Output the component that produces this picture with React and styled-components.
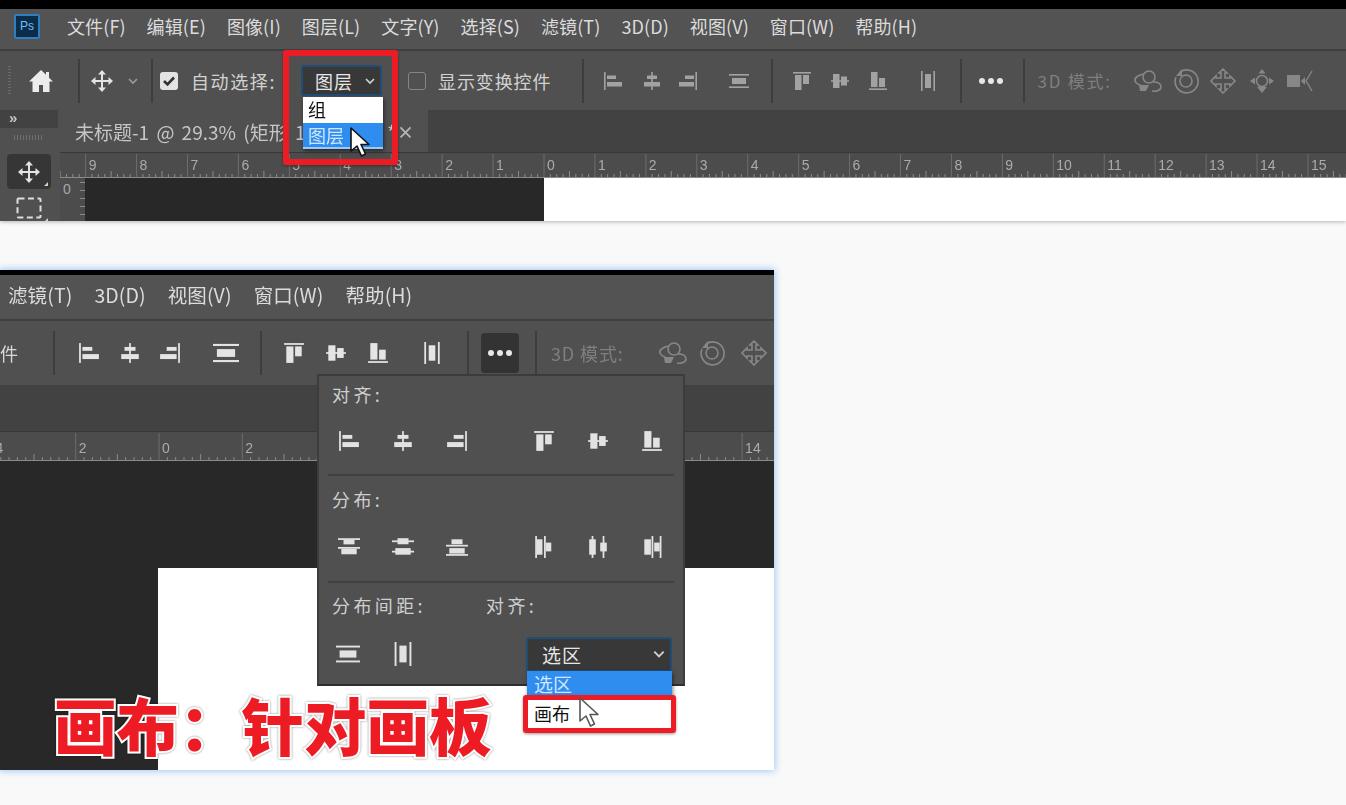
import React from "react";
import styled, { createGlobalStyle } from "styled-components";

const Global = createGlobalStyle`
  html, body { margin: 0; padding: 0; background: #f9f9f9; }
  body { width: 1346px; height: 805px; overflow: hidden; font-family: "Noto Sans CJK SC", "Noto Sans", sans-serif; }
`;

const Page = styled.div`
  width: 1346px;
  height: 805px;
  background: #f9f9f9;
`;
const TopWindow = styled.section`
  position: relative;
  height: 221px;
  background: #505050;
  box-shadow: 0 1px 4px rgba(0, 0, 0, 0.28);
`;
const BottomWindow = styled.section`
  position: relative;
  width: 774px;
  height: 500px;
  margin-top: 49px;
  background: #505050;
  box-shadow: 0 0 7px 1px #9cc8f8;
`;
const Clip = styled.div`
  height: 100%;
  overflow: hidden;
  display: flex;
  flex-direction: column;
  filter: blur(0.35px);
`;
const BlackStrip = styled.div`
  height: ${(p) => p.$h}px;
  background: #000;
  flex: none;
`;
const MenuBar = styled.nav`
  display: flex;
  align-items: center;
  flex: none;
  height: ${(p) => p.$h}px;
  padding: 0 0 6px ${(p) => p.$pl}px;
  gap: ${(p) => p.$gap}px;
  background: #535353;
  border-bottom: 2px solid #3f3f3f;
  box-sizing: border-box;
`;
const Logo = styled.div`
  width: 22px;
  height: 21px;
  border: 2px solid #2b7fc2;
  border-radius: 2px;
  background: #0c2c48;
  color: #6cc0f8;
  font: 12px/21px "Liberation Sans", sans-serif;
  text-align: center;
  margin-right: 6px;
  box-sizing: content-box;
`;
const MenuItem = styled.span`
  color: #dcdcdc;
  font-size: ${(p) => p.$fs || 18}px;
  letter-spacing: 0.1px;
  white-space: nowrap;
`;
const OptionsBar = styled.div`
  display: flex;
  align-items: center;
  flex: none;
  height: ${(p) => p.$h}px;
  background: #505050;
  overflow: hidden;
`;
const Grip = styled.div`
  width: 3px;
  height: 30px;
  margin-left: 8px;
  background: repeating-linear-gradient(#6a6a6a 0 1px, transparent 1px 3px);
`;
const Sep = styled.div`
  flex: none;
  width: 2px;
  height: 44px;
  margin-left: ${(p) => p.$ml}px;
  background: #3d3d3d;
`;
const Tool = styled.span`
  flex: none;
  display: inline-flex;
  align-items: center;
  justify-content: center;
  width: ${(p) => p.$w || 20}px;
  height: ${(p) => p.$w || 20}px;
  margin-left: ${(p) => p.$ml || 0}px;
  color: ${(p) => p.$c || "#a2a2a2"};
`;
const Check = styled.span`
  flex: none;
  display: inline-flex;
  align-items: center;
  justify-content: center;
  box-sizing: border-box;
  width: 18px;
  height: 18px;
  margin-left: ${(p) => p.$ml}px;
  border-radius: 3px;
  background: ${(p) => (p.$on ? "#e3e3e3" : "transparent")};
  border: ${(p) => (p.$on ? "none" : "1.5px solid #858585")};
`;
const OptionLabel = styled.span`
  flex: none;
  margin-left: ${(p) => p.$ml || 0}px;
  color: ${(p) => p.$c || "#d2d2d2"};
  font-size: ${(p) => p.$fs || 18}px;
  letter-spacing: ${(p) => p.$ls ?? 0.9}px;
  white-space: nowrap;
`;
const Select = styled.div`
  flex: none;
  display: flex;
  align-items: center;
  justify-content: space-between;
  box-sizing: border-box;
  width: ${(p) => p.$w}px;
  height: ${(p) => p.$h}px;
  margin-left: ${(p) => p.$ml || 0}px;
  padding: 0 4px 0 ${(p) => p.$pl}px;
  background: #383838;
  border: 2px solid #204d78;
  border-radius: 3px;
  color: #e6e6e6;
  font-size: ${(p) => p.$fs}px;
  letter-spacing: 1px;
`;
const DotsButton = styled.div`
  flex: none;
  display: flex;
  align-items: center;
  justify-content: center;
  width: 38px;
  height: 40px;
  margin-left: ${(p) => p.$ml}px;
  border-radius: 4px;
  background: #333;
`;
const Dots = styled.span`
  display: inline-flex;
  gap: 3px;
  margin-left: ${(p) => p.$ml || 0}px;
  i {
    width: 6px;
    height: 6px;
    border-radius: 50%;
    background: #e8e8e8;
  }
`;
const Work = styled.div`
  display: flex;
  flex: 1;
  min-height: 0;
  gap: 2px;
`;
const Side = styled.aside`
  flex: none;
  width: 58px;
  background: #505050;
  display: flex;
  flex-direction: column;
  align-items: center;
`;
const SideHead = styled.div`
  flex: none;
  align-self: stretch;
  height: 18px;
  background: #424242;
  color: #c6c6c6;
  font: bold 15px/16px "Liberation Sans", sans-serif;
  padding-left: 9px;
`;
const SideGrip = styled.div`
  flex: none;
  width: 30px;
  height: 5px;
  margin-top: 7px;
  background: repeating-linear-gradient(90deg, #6f6f6f 0 1px, transparent 1px 3px);
`;
const SideTool = styled.div`
  position: relative;
  flex: none;
  display: flex;
  align-items: center;
  justify-content: center;
  width: 44px;
  height: 35px;
  margin-top: ${(p) => p.$mt}px;
  border-radius: 4px;
  background: ${(p) => (p.$on ? "#363636" : "transparent")};
  color: #e6e6e6;
  &::after {
    content: "";
    position: absolute;
    right: 3px;
    bottom: 3px;
    border-style: solid;
    border-width: 0 0 4px 4px;
    border-color: transparent transparent #d0d0d0 transparent;
  }
`;
const Doc = styled.div`
  flex: 1;
  min-width: 0;
  display: flex;
  flex-direction: column;
`;
const TabRow = styled.div`
  flex: none;
  height: ${(p) => p.$h}px;
  background: #424242;
  border-bottom: 1px solid #383838;
  box-sizing: border-box;
  display: flex;
`;
const Tab = styled.div`
  width: 368px;
  display: flex;
  align-items: center;
  justify-content: space-between;
  box-sizing: border-box;
  padding: 0 14px 0 15px;
  background: #505050;
  color: #c6c6c6;
  font-size: 19px;
  word-spacing: 3px;
  white-space: nowrap;
  overflow: hidden;
`;
const TabClose = styled.span`
  color: #b4b4b4;
  font-weight: 700;
  font-size: 17px;
`;
const RulerBox = styled.div`
  flex: none;
  height: ${(p) => p.$h}px;
  background: #4c4c4c;
  svg { display: block; }
`;
const CanvasRow = styled.div`
  flex: 1;
  display: flex;
  min-height: 0;
`;
const VRuler = styled.div`
  flex: none;
  width: 25px;
  background-color: #4c4c4c;
  background-image: linear-gradient(#8b8b8b 1px, transparent 1px);
  background-size: 5px 8px;
  background-position: right 4px;
  background-repeat: repeat-y;
  box-sizing: border-box;
  color: #a8a8a8;
  font: 14px/18px "Liberation Sans", sans-serif;
  padding: 2px 0 0 3px;
`;
const DarkCanvas = styled.div`
  flex: none;
  width: ${(p) => p.$w}px;
  background: #282828;
`;
const WhiteCanvas = styled.div`
  flex: 1;
  background: #fff;
`;
const ArtCanvas = styled.div`
  flex: 1;
  display: flex;
  flex-direction: column;
  background: #282828;
  &::after {
    content: "";
    margin: auto 0 0 158px;
    height: 202px;
    background: #fff;
  }
`;
const RedBox = styled.div`
  position: absolute;
  left: ${(p) => p.$x}px;
  top: ${(p) => p.$y}px;
  width: ${(p) => p.$w}px;
  height: ${(p) => p.$h}px;
  box-sizing: border-box;
  border: ${(p) => p.$b}px solid #ed1c24;
  border-radius: 3px;
  box-shadow: 0 1px 3px rgba(0, 0, 0, 0.35);
`;
const DropList = styled.div`
  position: absolute;
  left: ${(p) => p.$x}px;
  top: ${(p) => p.$y}px;
  width: ${(p) => p.$w}px;
  display: flex;
  flex-direction: column;
  box-shadow: 1px 2px 4px rgba(0, 0, 0, 0.5);
`;
const DropItem = styled.div`
  height: ${(p) => p.$h}px;
  box-sizing: border-box;
  padding-left: ${(p) => p.$pl}px;
  background: ${(p) => (p.$on ? "#2f8df0" : "#fff")};
  color: ${(p) => (p.$on ? "#cfe6ff" : "#111")};
  border-bottom: ${(p) => (p.$line ? "2px solid #9ccaf8" : "none")};
  font-size: ${(p) => p.$fs}px;
  line-height: ${(p) => p.$h - 1}px;
`;
const Cursor = styled.svg`
  position: absolute;
  left: ${(p) => p.$x}px;
  top: ${(p) => p.$y}px;
`;
const Popover = styled.div`
  position: absolute;
  left: 317px;
  top: 104px;
  width: 368px;
  height: 312px;
  box-sizing: border-box;
  padding: 5px 11px 0 13px;
  background: #505050;
  border: 2px solid #3c3c3c;
  border-bottom-color: #2e2e2e;
`;
const PopLabel = styled.div`
  height: 26px;
  color: #cfcfcf;
  font-size: 18px;
  line-height: 26px;
  letter-spacing: 3.4px;
  white-space: nowrap;
`;
const IconRow = styled.div`
  display: flex;
  align-items: center;
  height: 22px;
  margin-top: ${(p) => p.$mt}px;
`;
const Rule = styled.hr`
  margin: ${(p) => p.$mt}px 0 ${(p) => p.$mb}px -4px;
  width: 346px;
  border: 0;
  height: 2px;
  background: #414141;
`;
const TwoLabels = styled.div`
  display: flex;
  gap: 60px;
`;
const BottomControls = styled.div`
  display: flex;
  align-items: center;
  justify-content: space-between;
  height: 36px;
  margin-top: 18px;
`;
const ToolGroup = styled.div`
  display: flex;
`;
const BigTitle = styled.div`
  position: absolute;
  left: 54px;
  top: 412px;
  font-family: "Noto Sans CJK SC", sans-serif;
  font-weight: 900;
  font-size: 62.5px;
  line-height: 84px;
  color: #ed1c24;
  white-space: nowrap;
  -webkit-text-stroke: 4px #fff;
  paint-order: stroke fill;
  filter: drop-shadow(0 0 1px rgba(0, 0, 0, 0.45));
`;

const icons = {
  alignLeft: <><rect x="1" y="1" width="1.6" height="18" /><rect x="4" y="4.5" width="9" height="3.5" /><rect x="4" y="11" width="15" height="4.5" /></>,
  alignHC: <><rect x="9.2" y="1" width="1.6" height="18" /><rect x="5" y="4.5" width="10" height="3.5" /><rect x="2" y="11" width="16" height="4.5" /></>,
  alignRight: <><rect x="17.4" y="1" width="1.6" height="18" /><rect x="7" y="4.5" width="9" height="3.5" /><rect x="1" y="11" width="15" height="4.5" /></>,
  distV: <><rect x="0" y="3" width="20" height="1.6" /><rect x="0" y="15.4" width="20" height="1.6" /><rect x="3" y="7" width="14" height="6" /></>,
  alignTop: <><rect x="1" y="1" width="18" height="1.6" /><rect x="3" y="4" width="6.5" height="15" /><rect x="11" y="4" width="6" height="9" /></>,
  alignVC: <><rect x="1" y="9.2" width="18" height="1.6" /><rect x="3" y="3" width="6.5" height="14" /><rect x="11" y="5.5" width="6" height="9" /></>,
  alignBottom: <><rect x="1" y="17.4" width="18" height="1.6" /><rect x="3" y="1" width="6.5" height="15" /><rect x="11" y="7" width="6" height="9" /></>,
  distH: <><rect x="3" y="0" width="1.6" height="20" /><rect x="15.4" y="0" width="1.6" height="20" /><rect x="7" y="3" width="6" height="14" /></>,
  distTop: <><rect x="0" y="2" width="20" height="1.6" /><rect x="5" y="3.6" width="10" height="4" /><rect x="0" y="10" width="20" height="1.6" /><rect x="3" y="11.6" width="14" height="5" /></>,
  distVC: <><rect x="5" y="2" width="10" height="5.5" /><rect x="0" y="4" width="20" height="1.6" /><rect x="3" y="11" width="14" height="6" /><rect x="0" y="13.4" width="20" height="1.6" /></>,
  distBottom: <><rect x="5" y="3" width="10" height="4.5" /><rect x="0" y="8" width="20" height="1.6" /><rect x="3" y="11" width="14" height="5" /><rect x="0" y="16.4" width="20" height="1.6" /></>,
  distLeft: <><rect x="2" y="0" width="1.6" height="20" /><rect x="3.6" y="3" width="5" height="14" /><rect x="10" y="0" width="1.6" height="20" /><rect x="11.6" y="6" width="5" height="8" /></>,
  distHC: <><rect x="2" y="3" width="6" height="14" /><rect x="4.2" y="0" width="1.6" height="20" /><rect x="12" y="6" width="6" height="8" /><rect x="14.2" y="0" width="1.6" height="20" /></>,
  distRight: <><rect x="3" y="3" width="6" height="14" /><rect x="9.6" y="0" width="1.6" height="20" /><rect x="12" y="6" width="5" height="8" /><rect x="17" y="0" width="1.6" height="20" /></>,
};

const Ic = ({ n, s = 20 }) => (
  <svg width={s} height={s} viewBox="0 0 20 20" fill="currentColor">{icons[n]}</svg>
);

const HomeIcon = () => (
  <svg width="26" height="24" viewBox="0 0 26 24" fill="#ececec">
    <path d="M13 1 1 12.5h3.5V23h6.5v-7h4v7h6.500V12.5H25l-4-3.800V3h-3v2.800z" />
  </svg>
);
const MoveIcon = ({ s = 24, c = "#e4e4e4" }) => (
  <svg width={s} height={s} viewBox="0 0 24 24" fill={c}>
    <path d="M12 1 8 5.500h3V11H5.500V8L1 12l4.500 4v-3H11v5.500H8L12 23l4-4.500h-3V13h5.500v3l4.500-4-4.500-4v3H13V5.500h3z" />
  </svg>
);
const Chevron = ({ c = "#9a9a9a", s = 12 }) => (
  <svg width={s} height={s} viewBox="0 0 12 12" fill="none" stroke={c} strokeWidth="1.7">
    <path d="m2 4 4 4 4-4" />
  </svg>
);
const Tick = () => (
  <svg width="14" height="14" viewBox="0 0 14 14" fill="none" stroke="#333" strokeWidth="2.6">
    <path d="m2 7 3.500 3.500L12 3.500" />
  </svg>
);
const Marquee = () => (
  <svg width="26" height="22" viewBox="0 0 26 22" fill="none" stroke="#dedede" strokeWidth="2" strokeDasharray="6 3.5">
    <rect x="1.5" y="1.5" width="23" height="19" rx="1" />
  </svg>
);
const Orbit = () => (
  <svg width="30" height="26" viewBox="0 0 30 26" fill="none" stroke="#878787" strokeWidth="1.6">
    <circle cx="16" cy="9" r="6" />
    <path d="M11 6C5 7 1 10 2 13c1 3 4 4 7 5M20 14c5 0 8 2 8 5s-5 5-9 4" />
    <path d="M6 17h10l-3 6H7z" fill="#878787" stroke="none" />
  </svg>
);
const Roll = () => (
  <svg width="26" height="26" viewBox="0 0 26 26" fill="none" stroke="#878787" strokeWidth="1.6">
    <path d="M7 4a11.500 11.500 0 1 1-4 5" />
    <circle cx="13" cy="13" r="6" />
    <path d="M9 1v7H3z" fill="#878787" stroke="none" />
  </svg>
);
const Pan = () => (
  <svg width="26" height="26" viewBox="0 0 26 26" fill="none" stroke="#878787" strokeWidth="1.6">
    <path d="m13 1 4 4h-2v5h5V8l5 5-5 5v-2h-5v5h2l-4 4-4-4h2v-5H6v2l-5-5 5-5v2h5V5H9z" />
  </svg>
);
const Slide = () => (
  <svg width="26" height="26" viewBox="0 0 26 26" fill="#878787">
    <circle cx="13" cy="13" r="5.5" fill="none" stroke="#878787" strokeWidth="1.6" />
    <path d="m13 1 3.500 4.500h-7zM1 13l5-3.500v7zM25 13l-5-3.500v7zM13 25l-5-6h10z" />
  </svg>
);
const Camera = () => (
  <svg width="28" height="24" viewBox="0 0 28 24" fill="#878787">
    <rect x="1" y="6" width="13" height="12" />
    <path d="m15 12 4-4v8z" />
    <path d="M26 2 20 12l6 10" fill="none" stroke="#878787" strokeWidth="1.4" />
  </svg>
);

const Arrow = ({ x, y, stroke, w = 22, h = 30 }) => (
  <Cursor $x={x} $y={y} width={w} height={h} viewBox="0 0 22 30">
    <path d="M2 1v23l6-5 4.500 10 4-2L12 17.500h8z" fill="#fff" stroke={stroke} strokeWidth="1.6" strokeLinejoin="round" />
  </Cursor>
);

const Ruler = ({ h, width, offset, zero, unit, step, ticks }) => {
  const items = [];
  const first = Math.ceil((offset - zero) / (unit / ticks)) - 1;
  const last = Math.floor((offset + width - zero) / (unit / ticks)) + 1;
  for (let i = first; i <= last; i++) {
    const x = zero + (i * unit) / ticks - offset;
    if (i % ticks === 0) {
      const n = (Math.abs(i) / ticks) * step;
      items.push(<line key={"m" + i} x1={x} x2={x} y1={1} y2={h - 1} stroke="#6d6d6d" />);
      items.push(
        <text key={"t" + i} x={x + 3} y={h - 8} fontSize="14" fontFamily="'Liberation Sans', sans-serif" fill="#ababab">{n}</text>
      );
    } else {
      const mid = i % (ticks / 2) === 0;
      items.push(<line key={"k" + i} x1={x} x2={x} y1={h - (mid ? 7 : 4)} y2={h - 1} stroke="#8b8b8b" />);
    }
  }
  return (
    <RulerBox $h={h}>
      <svg width={width} height={h}>
        {items}
        <line x1="0" x2={width} y1={h - 0.5} y2={h - 0.5} stroke="#8a8a8a" />
      </svg>
    </RulerBox>
  );
};

const topMenus = ["文件(F)", "编辑(E)", "图像(I)", "图层(L)", "文字(Y)", "选择(S)", "滤镜(T)", "3D(D)", "视图(V)", "窗口(W)", "帮助(H)"];
const bottomMenus = ["滤镜(T)", "3D(D)", "视图(V)", "窗口(W)", "帮助(H)"];

const popRow = (names) => names.map((n, i) => (
  <Tool key={n} $w={22} $ml={i === 0 ? 6 : i === 3 ? 65 : 32} $c="#e2e2e2"><Ic n={n} s={22} /></Tool>
));

export default function App() {
  return (
    <Page>
      <Global />
      <TopWindow>
        <Clip>
          <BlackStrip $h={9} />
          <MenuBar $h={42} $pl={14} $gap={21}>
            <Logo>Ps</Logo>
            {topMenus.map((m) => <MenuItem key={m}>{m}</MenuItem>)}
          </MenuBar>
          <OptionsBar $h={59}>
            <Grip />
            <Tool $w={26} $ml={17}><HomeIcon /></Tool>
            <Sep $ml={24} />
            <Tool $w={24} $ml={10}><MoveIcon /></Tool>
            <Tool $w={12} $ml={13}><Chevron /></Tool>
            <Sep $ml={12} />
            <Check $on $ml={7}><Tick /></Check>
            <OptionLabel $ml={13} $ls={1.6}>自动选择:</OptionLabel>
            <Select $w={81} $h={31} $ml={25} $pl={12} $fs={18}>图层<Chevron c="#d0d0d0" /></Select>
            <Check $ml={26} />
            <OptionLabel $ml={12}>显示变换控件</OptionLabel>
            <Sep $ml={31} />
            <Tool $ml={19}><Ic n="alignLeft" /></Tool>
            <Tool $ml={19}><Ic n="alignHC" /></Tool>
            <Tool $ml={16}><Ic n="alignRight" /></Tool>
            <Tool $ml={31}><Ic n="distV" /></Tool>
            <Sep $ml={22} />
            <Tool $ml={19}><Ic n="alignTop" /></Tool>
            <Tool $ml={18}><Ic n="alignVC" /></Tool>
            <Tool $ml={18}><Ic n="alignBottom" /></Tool>
            <Tool $ml={30}><Ic n="distH" /></Tool>
            <Sep $ml={22} />
            <Dots $ml={17}><i /><i /><i /></Dots>
            <Sep $ml={20} />
            <OptionLabel $ml={12} $c="#7f7f7f" $fs={17} $ls={1.8}>3D 模式:</OptionLabel>
            <Tool $w={30} $ml={21}><Orbit /></Tool>
            <Tool $w={26} $ml={10}><Roll /></Tool>
            <Tool $w={26} $ml={11}><Pan /></Tool>
            <Tool $w={26} $ml={13}><Slide /></Tool>
            <Tool $w={28} $ml={11}><Camera /></Tool>
          </OptionsBar>
          <Work>
            <Side>
              <SideHead>»</SideHead>
              <SideGrip />
              <SideTool $on $mt={14}><MoveIcon s={24} /></SideTool>
              <SideTool $mt={1}><Marquee /></SideTool>
            </Side>
            <Doc>
              <TabRow $h={43}>
                <Tab>
                  <span>未标题-1 @ 29.3% (矩形 1, RGB/8) *</span>
                  <TabClose>×</TabClose>
                </Tab>
              </TabRow>
              <Ruler h={25} width={1286} offset={60} zero={544} unit={50.93} step={1} ticks={8} />
              <CanvasRow>
                <VRuler>0</VRuler>
                <DarkCanvas $w={459} />
                <WhiteCanvas />
              </CanvasRow>
            </Doc>
          </Work>
        </Clip>
        <DropList $x={303} $y={97} $w={80}>
          <DropItem $h={26} $pl={5} $fs={18}>组</DropItem>
          <DropItem $h={26} $pl={5} $fs={18} $on $line>图层</DropItem>
        </DropList>
        <RedBox $x={283} $y={50} $w={115} $h={115} $b={6} />
        <Arrow x={349} y={127} stroke="#111" />
      </TopWindow>

      <BottomWindow>
        <Clip>
          <BlackStrip $h={5} />
          <MenuBar $h={46} $pl={8} $gap={22}>
            {bottomMenus.map((m) => <MenuItem key={m} $fs={19.5}>{m}</MenuItem>)}
          </MenuBar>
          <OptionsBar $h={64}>
            <OptionLabel $c="#d8d8d8">件</OptionLabel>
            <Sep $ml={34} />
            <Tool $w={22} $ml={23} $c="#e4e4e4"><Ic n="alignLeft" s={22} /></Tool>
            <Tool $w={22} $ml={19} $c="#e4e4e4"><Ic n="alignHC" s={22} /></Tool>
            <Tool $w={22} $ml={18} $c="#e4e4e4"><Ic n="alignRight" s={22} /></Tool>
            <Tool $ml={32} $w={26} $c="#e4e4e4"><Ic n="distV" s={26} /></Tool>
            <Sep $ml={21} />
            <Tool $w={22} $ml={21} $c="#e4e4e4"><Ic n="alignTop" s={22} /></Tool>
            <Tool $w={22} $ml={20} $c="#e4e4e4"><Ic n="alignVC" s={22} /></Tool>
            <Tool $w={22} $ml={20} $c="#e4e4e4"><Ic n="alignBottom" s={22} /></Tool>
            <Tool $w={22} $ml={32} $c="#e4e4e4"><Ic n="distH" s={22} /></Tool>
            <Sep $ml={24} />
            <DotsButton $ml={12}><Dots><i /><i /><i /></Dots></DotsButton>
            <Sep $ml={16} />
            <OptionLabel $ml={14} $c="#7f7f7f">3D 模式:</OptionLabel>
            <Tool $w={30} $ml={34}><Orbit /></Tool>
            <Tool $w={26} $ml={11}><Roll /></Tool>
            <Tool $w={26} $ml={16}><Pan /></Tool>
          </OptionsBar>
          <TabRow $h={47} />
          <Ruler h={29} width={774} offset={0} zero={159} unit={83.3} step={2} ticks={10} />
          <ArtCanvas />
        </Clip>
        <Popover>
          <PopLabel>对齐:</PopLabel>
          <IconRow $mt={23}>{popRow(["alignLeft", "alignHC", "alignRight", "alignTop", "alignVC", "alignBottom"])}</IconRow>
          <Rule $mt={22} $mb={10} />
          <PopLabel>分布:</PopLabel>
          <IconRow $mt={24}>{popRow(["distTop", "distVC", "distBottom", "distLeft", "distHC", "distRight"])}</IconRow>
          <Rule $mt={23} $mb={9} />
          <TwoLabels>
            <PopLabel>分布间距:</PopLabel>
            <PopLabel>对齐:</PopLabel>
          </TwoLabels>
          <BottomControls>
            <ToolGroup>
              <Tool $ml={4} $w={24} $c="#e2e2e2"><Ic n="distV" s={24} /></Tool>
              <Tool $ml={31} $w={24} $c="#e2e2e2"><Ic n="distH" s={24} /></Tool>
            </ToolGroup>
            <Select $w={146} $h={35} $pl={14} $fs={19}>选区<Chevron c="#cfcfcf" s={14} /></Select>
          </BottomControls>
        </Popover>
        <DropList $x={527} $y={401} $w={145}>
          <DropItem $h={27} $pl={7} $fs={19} $on>选区</DropItem>
          <DropItem $h={31} $pl={7} $fs={18}>画布</DropItem>
        </DropList>
        <RedBox $x={523} $y={425} $w={153} $h={38} $b={5} />
        <Arrow x={578} y={427} stroke="#555" />
        <BigTitle>画布：针对画板</BigTitle>
      </BottomWindow>
    </Page>
  );
}
